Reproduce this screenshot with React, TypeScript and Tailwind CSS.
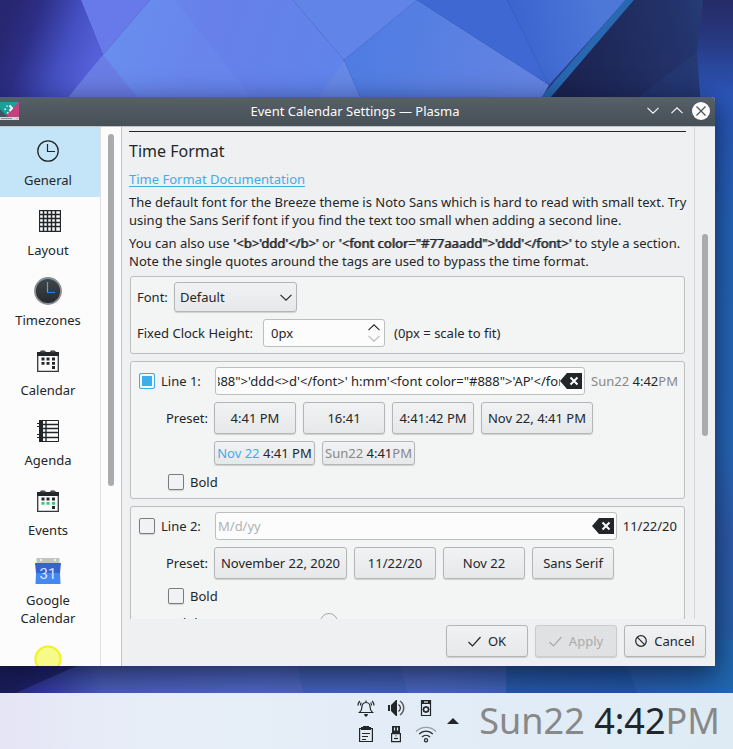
import React, { useState } from 'react'
import { clsx } from 'clsx'
import { twMerge } from 'tailwind-merge'

function Wallpaper() {
  return (
    <svg className="absolute inset-0 h-full w-full" viewBox="0 0 733 749" preserveAspectRatio="none" aria-hidden="true">
      <defs>
        <linearGradient id="violet" gradientUnits="userSpaceOnUse" x1="5" y1="20" x2="95" y2="55">
          <stop offset="0" stopColor="#272670" />
          <stop offset="0.3" stopColor="#2d2f87" />
          <stop offset="0.7" stopColor="#4550c2" />
          <stop offset="1" stopColor="#5560d8" />
        </linearGradient>
        <linearGradient id="sky" gradientUnits="userSpaceOnUse" x1="110" y1="10" x2="340" y2="90">
          <stop offset="0" stopColor="#678eee" />
          <stop offset="0.4" stopColor="#6880ea" />
          <stop offset="1" stopColor="#5f84ea" />
        </linearGradient>
        <linearGradient id="wedge" gradientUnits="userSpaceOnUse" x1="350" y1="40" x2="540" y2="90">
          <stop offset="0" stopColor="#4f7ce2" />
          <stop offset="1" stopColor="#6484e2" />
        </linearGradient>
        <linearGradient id="cobalt" gradientUnits="userSpaceOnUse" x1="510" y1="40" x2="600" y2="20">
          <stop offset="0" stopColor="#3a63cd" />
          <stop offset="1" stopColor="#4d78d8" />
        </linearGradient>
        <linearGradient id="navy" gradientUnits="userSpaceOnUse" x1="570" y1="90" x2="733" y2="50">
          <stop offset="0" stopColor="#1c2350" />
          <stop offset="0.75" stopColor="#23346c" />
          <stop offset="1" stopColor="#27417f" />
        </linearGradient>
        <linearGradient id="edge" x1="0" y1="0" x2="0" y2="1">
          <stop offset="0" stopColor="#262b66" />
          <stop offset="0.05" stopColor="#27387f" />
          <stop offset="0.13" stopColor="#2b57ba" />
          <stop offset="0.3" stopColor="#2565b8" />
          <stop offset="0.6" stopColor="#2768b8" />
          <stop offset="0.72" stopColor="#2f5cab" />
          <stop offset="1" stopColor="#2064aa" />
        </linearGradient>
        <linearGradient id="floor" x1="0" y1="0" x2="1" y2="0">
          <stop offset="0" stopColor="#23276b" />
          <stop offset="0.06" stopColor="#33399a" />
          <stop offset="0.14" stopColor="#4c5fb8" />
          <stop offset="0.35" stopColor="#5068c0" />
          <stop offset="0.6" stopColor="#4a66ba" />
          <stop offset="0.85" stopColor="#2b5caa" />
          <stop offset="1" stopColor="#2068b0" />
        </linearGradient>
      </defs>
      <rect width="733" height="749" fill="#2a3a86" />
      <polygon points="0,0 81,0 103,55 66,110 0,110" fill="url(#violet)" />
      <polygon points="81,0 150,0 103,55" fill="#6879ea" />
      <polygon points="150,0 293,0 344,60 318,110 58,110 103,55" fill="url(#sky)" />
      <polygon points="103,55 58,110 148,110" fill="#6a7de4" />
      <polygon points="175,0 262,110 148,110 103,55 150,0" fill="#6a92f4" opacity="0.25" />
      <polygon points="293,0 417,0 344,60" fill="#6084e8" />
      <polygon points="344,60 366,110 310,110" fill="#6688e6" />
      <polygon points="417,0 549,85 535,110 366,110 344,60" fill="url(#wedge)" />
      <polygon points="417,0 507,0 549,85" fill="#4068d2" />
      <polygon points="507,0 626,0 549,85" fill="url(#cobalt)" />
      <polygon points="625,0 634,0 540,110 530,110" fill="#2868b0" />
      <polygon points="634,0 733,0 733,110 540,110" fill="url(#navy)" />
      <polygon points="703,0 733,0 733,749 700,749 700,97 697,52" fill="url(#edge)" />
      <polygon points="697,52 700,110 622,110" fill="#2a4486" opacity="0.3" />
      <rect y="640" width="733" height="109" fill="url(#floor)" />
      <polygon points="0,700 90,660 0,660" fill="#14164a" opacity="0.6" />
      <polygon points="296,660 305,700 410,700 398,660" fill="#3558a8" opacity="0.35" />
      <polygon points="506,660 506,700 640,700 625,660" fill="#1f55a0" opacity="0.7" />
    </svg>
  )
}

function PlasmaLogo() {
  return (
    <svg className="h-[18px] w-[19px]" viewBox="0 0 19 18" aria-hidden="true">
      <path d="M0 0h19v15H0z" fill="#1f9f9a" />
      <path d="M19 0v15H4z" fill="#c2417f" />
      <path d="M0 7l8 8H0z" fill="#3e5563" />
      <path d="M9.500 3.500l2.500 2.700L9.500 9" stroke="#fff" strokeWidth="1.900" fill="none" />
      <path d="M4.500 6.500H6V8H4.500zM6.500 3.500h1.300v1.300H6.500zM7 10h1.500v1.500H7z" fill="#fff" />
      <path d="M0 15h19v3H0z" fill="#d5d8da" />
      <path d="M1 16.500h11M16.500 16.500h1" stroke="#8a8f93" />
    </svg>
  )
}

function ClockIcon() {
  return (
    <svg className="h-[22px] w-[22px]" viewBox="0 0 22 22" fill="none" stroke="#232629" aria-hidden="true">
      <circle cx="11" cy="11" r="10.200" strokeWidth="1.300" />
      <path d="M10.500 4v7.500H18" strokeWidth="1.200" />
    </svg>
  )
}

function GridIcon() {
  return (
    <svg className="ml-[3px] h-[22px] w-[22px]" viewBox="0 0 22 22" fill="none" stroke="#232629" aria-hidden="true">
      <path d="M.5.5h21v21H.5z" strokeWidth="1.300" />
      <path d="M4.500 0v22M8.500 0v22M12.500 0v22M16.500 0v22M0 4.500h22M0 8.500h22M0 12.500h22M0 16.500h22" strokeWidth="1.500" />
    </svg>
  )
}

function DarkClockIcon() {
  return (
    <svg className="h-[30px] w-[30px]" viewBox="0 0 30 30" fill="none" aria-hidden="true">
      <defs>
        <linearGradient id="dial" x1="0" y1="0" x2="0" y2="1">
          <stop offset="0" stopColor="#43484d" />
          <stop offset="1" stopColor="#26292d" />
        </linearGradient>
      </defs>
      <circle cx="15" cy="15" r="13" fill="url(#dial)" stroke="#878e95" strokeWidth="1.800" />
      <path d="M14.500 6v10" stroke="#3daee9" strokeWidth="1.200" />
      <path d="M14 16.500h8" stroke="#2a76f0" strokeWidth="1.200" />
    </svg>
  )
}

function CalendarIcon({ accent }: { accent: string }) {
  return (
    <svg className="h-[22px] w-[22px]" viewBox="0 0 22 22" aria-hidden="true">
      <path d="M.7 3v18.300h20.600V3" fill="none" stroke="#35383b" strokeWidth="1.300" />
      <path d="M0 2h3l1-1.500h3.500L9 2h4l1-1.500h3.500L19 2h3v4H0z" fill="#232629" />
      <path d="M4 1.800h4M14 1.800h4" stroke="#777" strokeWidth=".7" />
      <path d="M4.500 7.500h3v3h-3zM9.500 7.500h3v3h-3zM15 7.500h3v3h-3zM15 16h3v3h-3z" fill="#232629" />
      <path d="M4.500 12h3v2.700h-3zM9.500 12h3v2.700h-3zM15 12h3v2.700h-3z" fill={accent} />
    </svg>
  )
}

function AgendaIcon() {
  return (
    <svg className="h-[22px] w-[22px]" viewBox="0 0 22 22" fill="none" stroke="#232629" aria-hidden="true">
      <path d="M2 .5h19.500v21H2" />
      <path d="M2 0h4v22H2z" fill="#232629" stroke="none" />
      <path d="M9 0v22M5 4.500h17M5 8.500h17M5 12.500h17M5 17.500h17" strokeWidth="1.400" />
      <path d="M0 3.500h3M0 6.500h3M0 14.500h3M0 17.500h3" />
    </svg>
  )
}

function GoogleCalendarIcon() {
  return (
    <svg className="h-[26px] w-[26px]" viewBox="0 0 26 26" aria-hidden="true">
      <path d="M1.500 0h23v6h-23z" fill="#c3c3c3" />
      <circle cx="6" cy="2" r="1" fill="#fff" />
      <circle cx="20" cy="2" r="1" fill="#fff" />
      <path d="M0 5h26l-1 10H1z" fill="#3763cc" />
      <path d="M1 15h24l.5 11H.5z" fill="#4688f3" />
      <text x="13" y="20.500" fontSize="15" fill="#dce6fb" textAnchor="middle" fontFamily="Roboto">31</text>
    </svg>
  )
}

function SunIcon() {
  return (
    <svg className="h-[28px] w-[28px]" viewBox="0 0 28 28" aria-hidden="true">
      <circle cx="14" cy="14" r="12.600" fill="#f6fa86" stroke="#f2f218" strokeWidth="2" />
    </svg>
  )
}

const pages = [
  { label: 'General', icon: <ClockIcon /> },
  { label: 'Layout', icon: <GridIcon /> },
  { label: 'Timezones', icon: <DarkClockIcon /> },
  { label: 'Calendar', icon: <CalendarIcon accent="#232629" /> },
  { label: 'Agenda', icon: <AgendaIcon /> },
  { label: 'Events', icon: <CalendarIcon accent="#2ecc71" /> },
  { label: 'Google Calendar', icon: <GoogleCalendarIcon /> },
  { label: 'Weather', icon: <SunIcon /> },
]

function Chevron({ up = false, className = '' }: { up?: boolean; className?: string }) {
  return (
    <svg className={clsx('h-[7px] w-[12px]', className)} viewBox="0 0 12 7" fill="none" stroke="currentColor" strokeWidth="1.100" aria-hidden="true">
      <path d={up ? 'M.5 6.200L6 .8l5.500 5.400' : 'M.5.8L6 6.200 11.500.8'} />
    </svg>
  )
}

function ClearButton() {
  return (
    <button type="button" aria-label="Clear text" className="mr-[2px] shrink-0">
      <svg className="h-[16px] w-[22px]" viewBox="0 0 22 16" aria-hidden="true">
        <path d="M0 8l7-8h15v16H7z" fill="#232629" />
        <path d="M10.500 4.500l7 7M17.500 4.500l-7 7" stroke="#fcfcfc" strokeWidth="2" />
      </svg>
    </button>
  )
}

function PushButton({ className, children, disabled }: { className?: string; children: React.ReactNode; disabled?: boolean }) {
  return (
    <button
      type="button"
      disabled={disabled}
      className={twMerge(
        'flex h-8 items-center justify-center whitespace-nowrap rounded-[3px] border shadow-[0_1px_1px_rgba(0,0,0,0.15)]',
        disabled
          ? 'border-[#cbcccd] bg-[#e0e1e2] text-[#a9abac]'
          : 'border-[#b3b5b6] bg-linear-to-b from-[#f1f2f3] to-[#e7e8ea]',
        className
      )}
    >
      {children}
    </button>
  )
}

function CheckBox({ label, checked = false }: { label: string; checked?: boolean }) {
  const [on, setOn] = useState(checked)
  return (
    <label className="flex items-center gap-[6px]">
      <input
        type="checkbox"
        checked={on}
        onChange={(e) => setOn(e.target.checked)}
        className="h-4 w-4 appearance-none rounded-[2px] border border-[#7a7c7e] bg-[#f1f2f3] shadow-[0_1px_1px_rgba(0,0,0,0.15)] checked:border-[#3daee9] checked:bg-[#3daee9] checked:shadow-[inset_0_0_0_2px_#f1f8fc]"
      />
      <span>{label}</span>
    </label>
  )
}

function GroupBox({ className, children }: { className?: string; children: React.ReactNode }) {
  return <section className={clsx('mx-px rounded-[3px] border border-[#bcbebf] bg-[#f3f4f4]', className)}>{children}</section>
}

function Sidebar() {
  return (
    <aside className="flex shrink-0 overflow-hidden border-r border-[#c3c5c6] bg-[#fcfcfc]">
      <nav className="w-[101px] border-r border-[#dfe0e1]">
        {pages.map((page, i) => (
          <a
            key={page.label}
            href="#"
            className={clsx('flex min-h-[70px] flex-col items-center pb-2 pl-3 pr-4 text-center', i === 0 && 'bg-[#c4e5f7]')}
          >
            <span className="flex h-[46px] shrink-0 items-center pt-[2px]">{page.icon}</span>
            <span className="-mt-[2px]">{page.label}</span>
          </a>
        ))}
      </nav>
      <div className="w-5 pl-[7px] pt-[7px]">
        <div className="h-[352px] w-[6px] rounded-full bg-[#a9abac]" />
      </div>
    </aside>
  )
}

function ClockText({ time }: { time: string }) {
  return (
    <span className="whitespace-nowrap text-[#888888]">
      Sun22 <span className="text-[#232629]">{time}</span>PM
    </span>
  )
}

// same advance widths as the regular face, only thicker
function Strong({ children }: { children: React.ReactNode }) {
  return <b className="font-normal [text-shadow:1px_0_0_rgba(35,38,41,0.75)]">{children}</b>
}

function Settings() {
  return (
    <div className="min-w-0 flex-1 overflow-hidden pl-[7px] pr-2">
      <div className="h-0">
        <div className="mt-1 border-t border-[#232629]" />
        <h2 className="mt-[7px] text-[16px] leading-[24px]">Time Format</h2>
        <a href="#" className="mt-[7px] block w-fit text-[#3daee9] underline underline-offset-2">
          Time Format Documentation
        </a>
        <div className="-mr-1">
          <p className="mt-[5px]">
            The default font for the Breeze theme is Noto Sans which is hard to read with small text. Try using the Sans
            Serif font if you find the text too small when adding a second line.
          </p>
          <p className="mt-[5px]">
            You can also use <Strong>'&lt;b&gt;'ddd'&lt;/b&gt;'</Strong> or{' '}
            <Strong>'&lt;font color="#77aaadd"&gt;'ddd'&lt;/font&gt;'</Strong> to style a section. Note the single quotes
            around the tags are used to bypass the time format.
          </p>
        </div>

        <GroupBox className="mt-[6px] flex flex-col gap-[7px] px-[5px] pb-[6px] pt-[5px]">
          <div className="flex items-center">
            <label htmlFor="font" className="w-[38px] pl-px">Font:</label>
            <div className="grid items-center">
              <select
                id="font"
                className="col-start-1 row-start-1 h-[30px] w-[123px] appearance-none rounded-[3px] border border-[#b3b5b6] bg-linear-to-b from-[#f1f2f3] to-[#e7e8ea] pl-[5px] shadow-[0_1px_1px_rgba(0,0,0,0.15)]"
              >
                <option>Default</option>
              </select>
              <Chevron className="pointer-events-none col-start-1 row-start-1 mr-[5px] justify-self-end" />
            </div>
          </div>
          <div className="flex items-center">
            <label htmlFor="height" className="w-[127px] pl-px">Fixed Clock Height:</label>
            <div className="flex h-7 w-[122px] items-center rounded-[3px] border border-[#bcbebf] bg-[#fcfcfc] pl-[7px] pr-[4px]">
              <input id="height" defaultValue="0px" className="min-w-0 flex-1 outline-none" />
              <div className="flex flex-col gap-1">
                <button type="button" aria-label="Increase"><Chevron up className="block" /></button>
                <button type="button" aria-label="Decrease"><Chevron className="block text-[#b8babb]" /></button>
              </div>
            </div>
            <span className="ml-[9px]">(0px = scale to fit)</span>
          </div>
        </GroupBox>

        <GroupBox className="mt-[7px] px-[7px] pb-[7px] pt-[5px]">
          <div className="flex items-center">
            <div className="w-[77px] pl-px"><CheckBox label="Line 1:" checked /></div>
            <div className="flex h-7 min-w-0 flex-1 items-center overflow-hidden rounded-[3px] border border-[#bcbebf] bg-[#fcfcfc] pl-[2px]">
              <div className="flex min-w-0 flex-1 justify-end overflow-hidden">
                <input
                  aria-label="Line 1 format"
                  defaultValue={`888">'ddd<>d'</font>' h:mm'<font color="#888">'AP'</font>'`}
                  className="w-[347px] shrink-0 outline-none"
                />
              </div>
              <ClearButton />
            </div>
            <span className="ml-[6px] w-[86px]"><ClockText time="4:42" /></span>
          </div>
          <div className="mt-[7px] flex">
            <span className="w-[76px] pl-7 leading-8">Preset:</span>
            <div className="flex min-w-0 flex-1 flex-wrap gap-[7px]">
              <PushButton className="w-[82px]">4:41 PM</PushButton>
              <PushButton className="w-[82px]">16:41</PushButton>
              <PushButton className="w-[82px]">4:41:42 PM</PushButton>
              <PushButton className="w-[112px]">Nov 22, 4:41 PM</PushButton>
              <div className="flex w-full gap-[7px]">
                <PushButton className="h-6 w-[101px]">
                  <span className="text-[#3daee9]">Nov 22</span>&nbsp;4:41 PM
                </PushButton>
                <PushButton className="h-6 w-[93px]"><ClockText time="4:41" /></PushButton>
              </div>
            </div>
          </div>
          <div className="mt-2 pl-[30px]"><CheckBox label="Bold" /></div>
        </GroupBox>

        <GroupBox className="mt-[7px] px-[7px] pb-[7px] pt-[5px]">
          <div className="flex items-center">
            <div className="w-[77px] pl-px"><CheckBox label="Line 2:" /></div>
            <div className="flex h-7 min-w-0 flex-1 items-center rounded-[3px] border border-[#bcbebf] bg-[#fcfcfc] pl-[2px]">
              <input aria-label="Line 2 format" placeholder="M/d/yy" className="min-w-0 flex-1 outline-none placeholder:text-[#b0b2b3]" />
              <ClearButton />
            </div>
            <span className="ml-[6px]">11/22/20</span>
          </div>
          <div className="mt-[7px] flex">
            <span className="w-[76px] pl-7 leading-8">Preset:</span>
            <div className="flex min-w-0 flex-1 flex-wrap gap-[7px]">
              <PushButton className="w-[133px]">November 22, 2020</PushButton>
              <PushButton className="w-[82px]">11/22/20</PushButton>
              <PushButton className="w-[82px]">Nov 22</PushButton>
              <PushButton className="w-[82px]">Sans Serif</PushButton>
            </div>
          </div>
          <div className="mt-2 pl-[30px]"><CheckBox label="Bold" /></div>
          <div className="mt-2 flex items-start pl-7">
            <label htmlFor="line2-height" className="w-[154px] leading-[20px]">Height:</label>
            <input
              id="line2-height"
              type="range"
              defaultValue="0"
              className="h-[18px] w-[200px] appearance-none [&::-webkit-slider-thumb]:h-[18px] [&::-webkit-slider-thumb]:w-[18px] [&::-webkit-slider-thumb]:appearance-none [&::-webkit-slider-thumb]:rounded-full [&::-webkit-slider-thumb]:border [&::-webkit-slider-thumb]:border-[#a4a6a7] [&::-webkit-slider-thumb]:bg-[#f1f2f3]"
            />
          </div>
        </GroupBox>
      </div>
    </div>
  )
}

function CheckIcon() {
  return (
    <svg className="h-[11px] w-[13px]" viewBox="0 0 13 11" fill="none" stroke="currentColor" strokeWidth="1.200" aria-hidden="true">
      <path d="M.5 6L4.500 10 12.500 1" />
    </svg>
  )
}

function SettingsWindow() {
  return (
    <main className="mr-[18px] flex min-h-0 flex-1 flex-col overflow-hidden rounded-tr-[4px] bg-[#eff0f1] shadow-[0_8px_28px_2px_rgba(4,8,36,0.6)]">
      <header className="flex h-[29px] shrink-0 items-center bg-linear-to-b from-[#566068] to-[#475057] pb-[2px] text-[#fcfcfc]">
        <div className="w-[66px]"><PlasmaLogo /></div>
        <h1 className="flex-1 pr-[3px] text-center">Event Calendar Settings — Plasma</h1>
        <div className="flex items-center gap-3 pr-[5px]">
          <button type="button" aria-label="Minimize"><Chevron className="block" /></button>
          <button type="button" aria-label="Maximize"><Chevron up className="block" /></button>
          <button type="button" aria-label="Close" className="-ml-[3px]">
            <svg className="block h-[18px] w-[18px]" viewBox="0 0 18 18" aria-hidden="true">
              <circle cx="9" cy="9" r="9" fill="#fcfcfc" />
              <path d="M4.500 4.500l9 9M13.500 4.500l-9 9" stroke="#475057" strokeWidth="1.200" />
            </svg>
          </button>
        </div>
      </header>
      <div className="flex min-h-0 flex-1 border-t border-[#c3c5c6]">
        <Sidebar />
        <div className="flex min-w-0 flex-1 flex-col">
          <div className="flex min-h-0 flex-1">
            <Settings />
            <div className="w-[21px] border-l border-[#d3d5d6] pl-[7px] pt-[107px]">
              <div className="h-[202px] w-[6px] rounded-full bg-[#a9abac]" />
            </div>
          </div>
          <footer className="flex h-[47px] shrink-0 justify-end gap-[7px] pr-[9px] pt-[6px]">
            <PushButton className="w-[82px] gap-[7px]"><CheckIcon />OK</PushButton>
            <PushButton className="w-[82px] gap-[7px]" disabled><CheckIcon />Apply</PushButton>
            <PushButton className="w-[82px] gap-[7px]">
              <svg className="h-3 w-3" viewBox="0 0 12 12" fill="none" stroke="currentColor" strokeWidth="1.200" aria-hidden="true">
                <circle cx="6" cy="6" r="5.300" />
                <path d="M2.200 2.200l7.600 7.600" />
              </svg>
              Cancel
            </PushButton>
          </footer>
        </div>
      </div>
    </main>
  )
}

function TrayButton({ label, children }: { label: string; children: React.ReactNode }) {
  return (
    <button type="button" aria-label={label} className="flex items-center justify-center">
      <svg className="block h-[18px] w-[22px]" viewBox="0 0 22 18" fill="none" stroke="#232629" strokeWidth="1.200" aria-hidden="true">
        {children}
      </svg>
    </button>
  )
}

function Panel() {
  return (
    <footer className="flex h-14 shrink-0 items-center justify-end bg-linear-to-r from-[#e6e5f6] via-[#e7eef8] via-20% to-[#deebf5] pr-[13px]">
      <div className="grid grid-cols-3 gap-x-2 gap-y-2">
        <TrayButton label="Notifications">
          <path d="M4.500 13.500h13c-2.300-2-2.500-3.500-2.500-6a4 4 0 0 0-8 0c0 2.500-.2 4-2.500 6zM11 1.500v2" />
          <path d="M9 15h4l-1 2.500h-2z" fill="#232629" stroke="none" />
          <path d="M3 6.500c0-2 .5-3 1.800-4.500M5.500 6.500c0-1 .2-2 .8-3M19 6.500c0-2-.5-3-1.800-4.500M16.500 6.500c0-1-.2-2-.8-3" />
        </TrayButton>
        <TrayButton label="Volume">
          <path d="M3 6h2v6H3zM6 6l5-5h1v16h-1l-5-5z" fill="#232629" stroke="none" />
          <path d="M13.500 5.500a4.200 4.200 0 0 1 0 7" />
          <path d="M15 2a8.500 8.500 0 0 1 0 14" strokeWidth="1.500" opacity=".75" />
        </TrayButton>
        <TrayButton label="Device settings">
          <path d="M6.500 1.500h9v15h-9z" />
          <path d="M6 1h10v4H6z" fill="#232629" stroke="none" />
          <path d="M9 3h4" stroke="#e4edf7" />
          <circle cx="11" cy="10.500" r="2.500" strokeWidth="1.500" />
          <path d="M11 7v1M11 13v1M7.500 10.500h1M13.500 10.500h1M8.700 8.200l.7.700M12.600 12.100l.7.700M13.300 8.200l-.7.700M9.400 12.100l-.7.700" />
        </TrayButton>
        <TrayButton label="Clipboard">
          <path d="M4.600 3.500h12.800v13H4.600z" />
          <path d="M6 2h2V1h6v1h2v3H6z" fill="#232629" stroke="none" />
          <path d="M7 8.500h8M7 11.500h6M7 14.500h4" />
        </TrayButton>
        <TrayButton label="Removable device">
          <path d="M7 1h8v8H7z" fill="#232629" stroke="none" />
          <path d="M9.500 2.500v3M12.500 2.500v3" stroke="#e4edf7" />
          <path d="M6.600 8.600h8.800v8H6.600z" fill="#e4edf7" />
          <path d="M9 13.500h4" />
          <path d="M11 10v1.500" opacity=".6" />
        </TrayButton>
        <TrayButton label="Wireless network">
          <path d="M1 6.500a14 14 0 0 1 20 0" opacity=".4" />
          <path d="M4.200 9a9.500 9.500 0 0 1 13.600 0M7 12a5.500 5.500 0 0 1 8 0" />
          <circle cx="11" cy="15.300" r="1.600" />
        </TrayButton>
      </div>
      <button type="button" aria-label="Show hidden icons" className="ml-[10px]">
        <svg className="block h-[6px] w-3" viewBox="0 0 12 6" aria-hidden="true">
          <path d="M0 6l6-6 6 6z" fill="#232629" />
        </svg>
      </button>
      <time className="ml-[20px] text-[36px] leading-[56px]"><ClockText time="4:42" /></time>
    </footer>
  )
}

export default function App() {
  return (
    <div className="relative h-screen overflow-hidden font-['Noto_Sans',sans-serif] text-[13px] leading-[18px] text-[#232629]">
      <Wallpaper />
      <div className="relative flex h-full flex-col pt-[97px]">
        <SettingsWindow />
        <div className="h-[27px] shrink-0" />
        <Panel />
      </div>
    </div>
  )
}
